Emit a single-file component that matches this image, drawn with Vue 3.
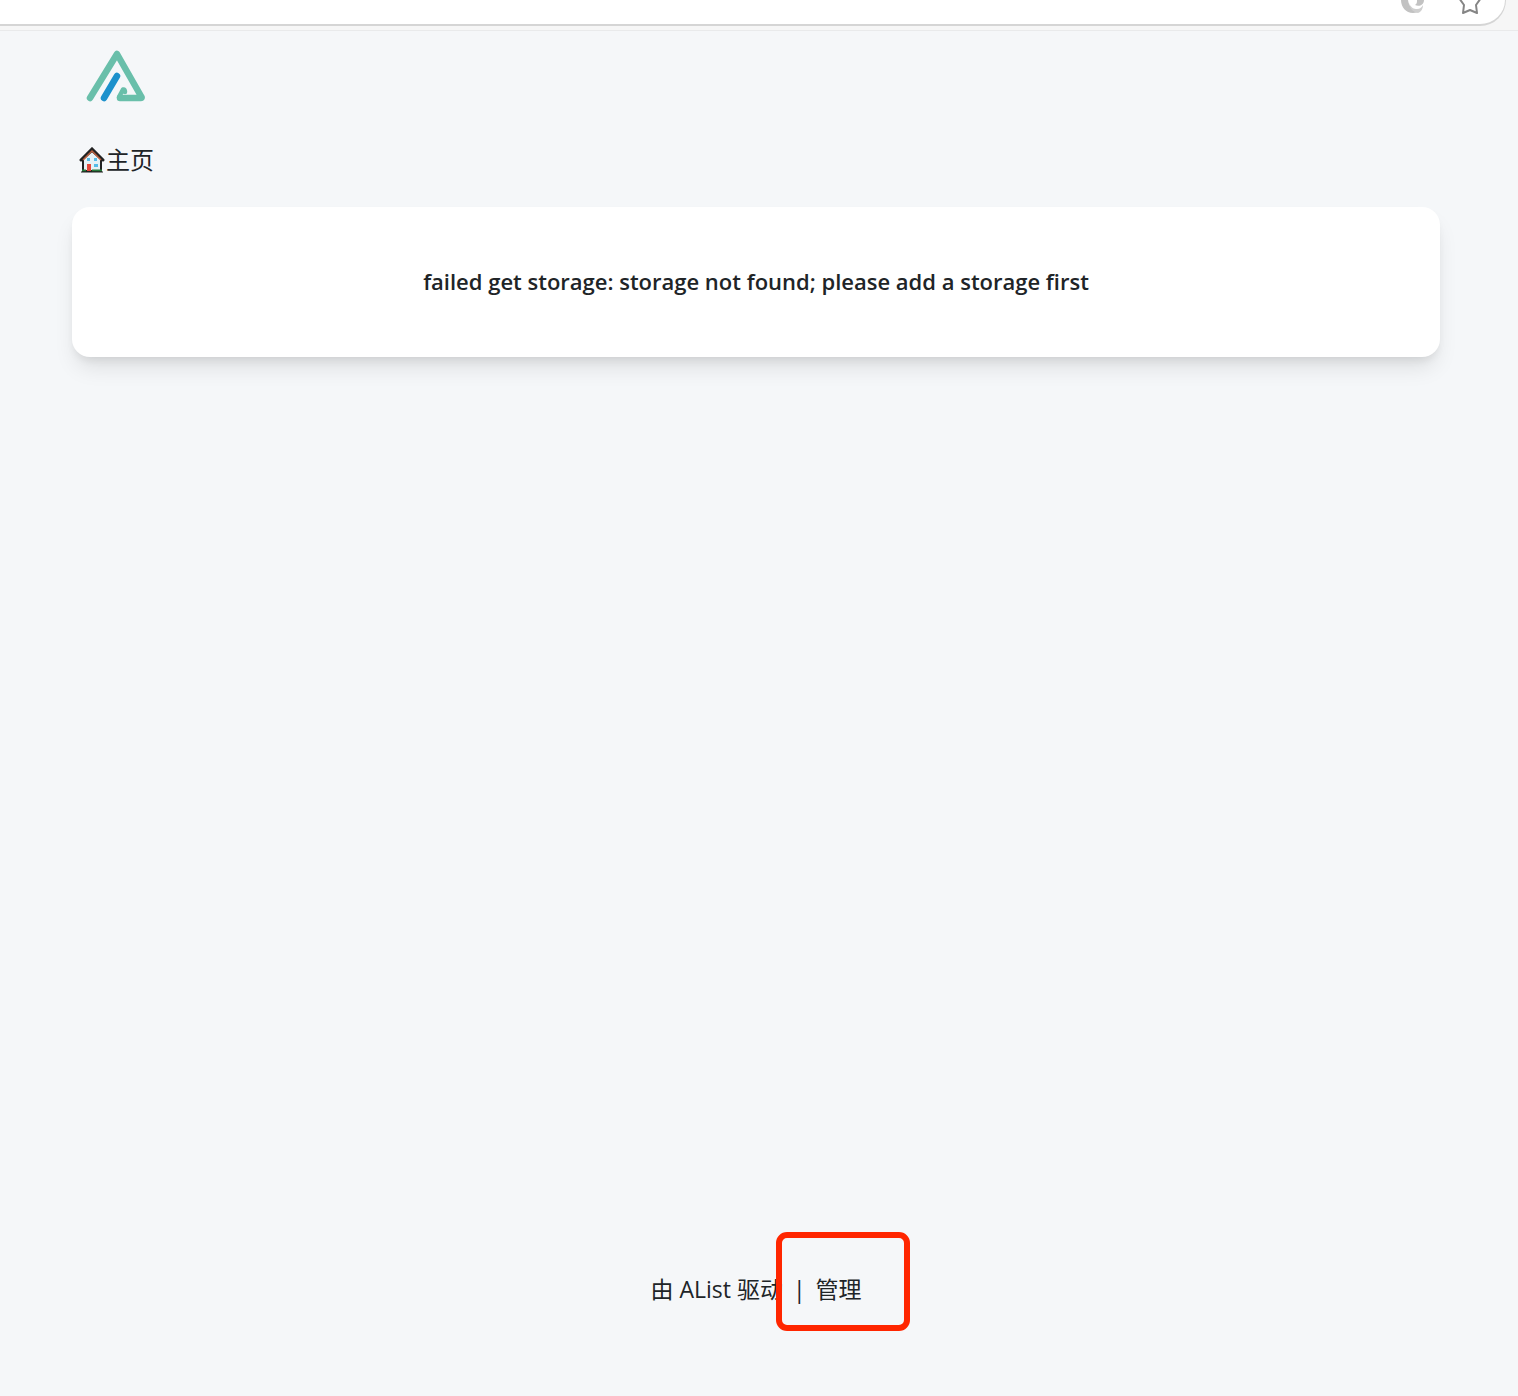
<template>
  <div class="page">
    <div class="toolbar">
      <div class="address">
        <svg class="swirl" viewBox="0 0 24 14" aria-hidden="true">
          <path d="M0 0C0 7 5 13 12 13C15 13 17 12 18 11C12 11 8 7 7 0Z" fill="#c2c2c2" />
          <path d="M8 3C10 8 13 9 16 9C19 9 21 7 22 5C22 9 20 12 17 13C12 12 9 9 8 3Z" fill="#cfcfcf" />
          <path d="M16 0C16 2 16 4 14 5C18 7 23 5 23 0Z" fill="#c2c2c2" />
        </svg>
        <button class="star" type="button" aria-label="收藏">
          <svg viewBox="0 0 26 16">
            <path
              d="M9 -3L2 -2L7 5L6 13L13 10L20 13L19 5L24 -2"
              fill="none"
              stroke="#858585"
              stroke-width="2"
              stroke-linejoin="round"
            />
          </svg>
        </button>
      </div>
    </div>

    <header class="header">
      <svg class="logo" viewBox="0 0 60 52" aria-hidden="true">
        <g fill="none" stroke-width="6.500" stroke-linecap="round" stroke-linejoin="round">
          <path d="M4 48L31 4L55.500 47Q56 48 55 48H34" stroke="#69bfaa" />
          <path d="M33 47L37 39.500Q39 39 39 42" stroke="#69bfaa" stroke-width="4.500" />
          <path d="M18 48L31 26" stroke="#1d91cc" />
        </g>
      </svg>
    </header>

    <nav class="nav">
      <a class="home" href="#">
        <svg class="house" viewBox="0 0 26 26" aria-hidden="true">
          <path d="M4 12L13 4L22 12V24H4Z" fill="#e6f1f5" stroke="#222" stroke-width="2" />
          <path d="M2 13L13 2L24 13" fill="none" stroke="#222" stroke-width="3" stroke-linecap="round" />
          <path d="M4 13L13 4L22 13" fill="none" stroke="#b9603f" stroke-width="1.500" />
          <path d="M8 17H12V24H8Z" fill="#e5483a" />
          <path d="M15 17H19V20H15ZM8 11H11V14H8ZM15 11H18V14H15Z" fill="#55bce8" />
          <path d="M3 23.500H7M13 23.500H23" stroke="#287b3c" stroke-width="2" />
          <path d="M2 25H24" stroke="#222" stroke-width="1" />
        </svg>
        <span>主页</span>
      </a>
    </nav>

    <main class="card">
      <h2 class="message">{{ message }}</h2>
    </main>

    <footer class="footer">
      <a href="#">由 AList 驱动</a>
      <span class="divider">|</span>
      <a class="manage" href="#">管理</a>
    </footer>
  </div>
</template>

<script setup>
import { ref } from "vue";

const message = ref("failed get storage: storage not found; please add a storage first");
</script>

<style>
body {
  background: #f5f7f9;
}
</style>

<style scoped>
.page {
  display: flex;
  flex-direction: column;
  min-height: 100vh;
  font-family: "Open Sans", "Noto Sans CJK SC", sans-serif;
  font-size: 23px;
  line-height: 36px;
  color: #202427;
}
a {
  color: inherit;
  text-decoration: none;
}
.toolbar {
  box-sizing: border-box;
  height: 31px;
  padding-right: 12px;
  overflow: hidden;
  background: #f6f6f6;
  border-bottom: 1px solid #e9eaeb;
}
.address {
  box-sizing: border-box;
  display: flex;
  align-items: flex-start;
  justify-content: flex-end;
  gap: 32px;
  height: 26px;
  padding-right: 22px;
  background: #fff;
  border-right: 1px solid #d5d5d5;
  border-bottom: 2px solid #d5d5d5;
  border-bottom-right-radius: 26px;
}
.swirl {
  width: 24px;
  height: 14px;
}
.star {
  width: 26px;
  height: 16px;
  padding: 0;
  background: none;
  border: 0;
}
.star svg {
  display: block;
  width: 100%;
  height: 100%;
}
.header {
  padding: 19px 86px 0;
}
.logo {
  display: block;
  width: 60px;
  height: 52px;
}
.nav {
  display: flex;
  padding: 40px 79px 29px;
}
.home {
  display: flex;
  align-items: center;
  gap: 1px;
  font-size: 24px;
}
.house {
  width: 26px;
  height: 26px;
}
.card {
  margin: 0 78px 0 72px;
  padding: 56px 24px 58px;
  text-align: center;
  background: #fff;
  border-radius: 18px;
  box-shadow: 0 14px 22px -4px rgba(0, 0, 0, 0.1), 0 6px 9px -3px rgba(0, 0, 0, 0.08);
}
.message {
  margin: 0;
  font-size: 22px;
  font-weight: 600;
  line-height: 36px;
}
.footer {
  display: flex;
  justify-content: center;
  margin-top: auto;
  padding: 0 78px 89px 72px;
}
.divider {
  margin: 0 10px;
}
.manage {
  position: relative;
}
/* highlight frame around the manage link */
.manage::after {
  position: absolute;
  top: -39px;
  right: -48px;
  bottom: -24px;
  left: -40px;
  content: "";
  border: 6px solid #ff2600;
  border-radius: 11px;
  pointer-events: none;
}
</style>
